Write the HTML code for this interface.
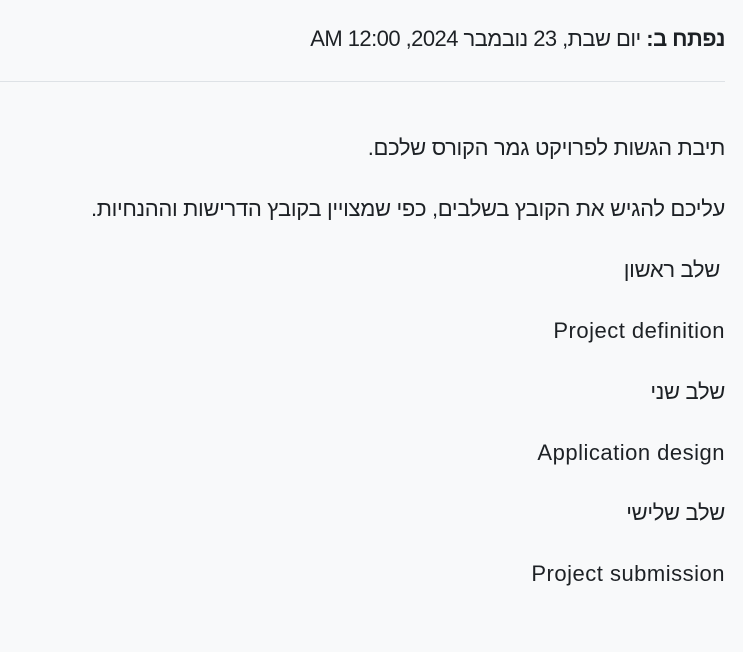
<!DOCTYPE html>
<html><head><meta charset="utf-8"><style>
html,body{margin:0;padding:0;background:#f8f9fa;width:743px;height:652px;overflow:hidden}
body{font-family:"Liberation Sans","Noto Sans CJK SC",sans-serif;color:#1d2125;direction:rtl;font-size:22px}
.hdr{position:absolute;right:18px;top:24px;line-height:30px;white-space:nowrap;letter-spacing:-0.55px}
.hr{position:absolute;left:0;width:725px;top:81px;height:1px;background:#dee2e6}
p{position:absolute;right:18px;margin:0;line-height:30px;white-space:nowrap;letter-spacing:-0.33px}
p.l{letter-spacing:0.5px}
</style></head><body>
<div class="hdr"><b>נפתח ב:</b> יום שבת, 23 נובמבר 2024, 12:00 AM</div>
<div class="hr"></div>
<p style="top:133px">תיבת הגשות לפרויקט גמר הקורס שלכם.</p>
<p style="top:194px">עליכם להגיש את הקובץ בשלבים, כפי שמצויין בקובץ הדרישות וההנחיות.</p>
<p style="top:255px;padding-right:5px">שלב ראשון</p>
<p class="l" style="top:316px">Project definition</p>
<p style="top:377px">שלב שני</p>
<p class="l" style="top:438px">Application design</p>
<p style="top:498px">שלב שלישי</p>
<p class="l" style="top:559px">Project submission</p>
</body></html>
